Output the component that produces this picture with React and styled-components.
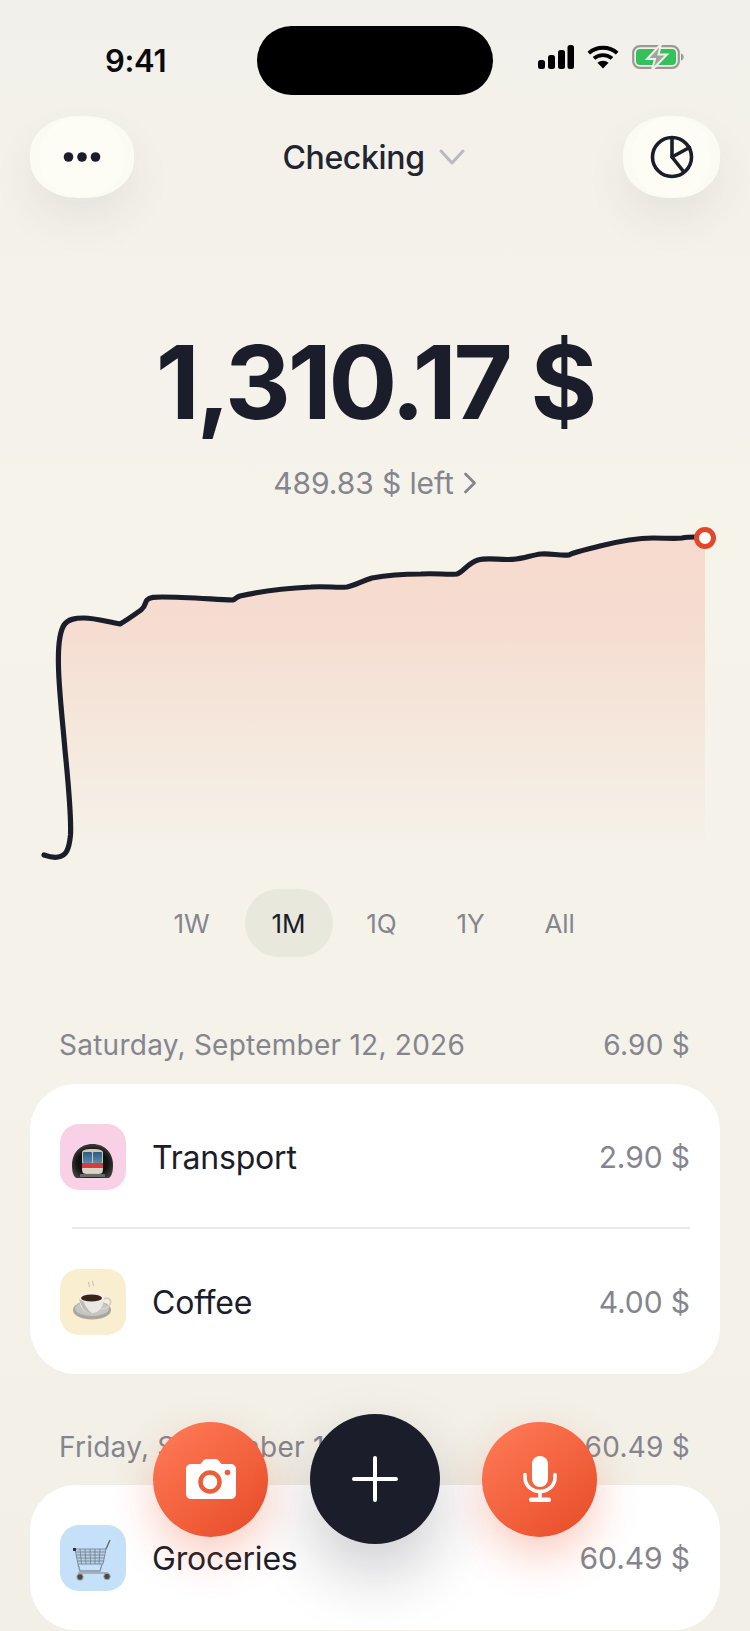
import styled, { createGlobalStyle } from "styled-components";

const GlobalStyle = createGlobalStyle`
  html, body {
    margin: 0;
    padding: 0;
    background: #f3f1e8;
  }
  * {
    box-sizing: border-box;
  }
`;

const Screen = styled.div`
  position: relative;
  width: 750px;
  height: 1631px;
  overflow: hidden;
  background: linear-gradient(#f2f0ea 0, #f5f3ea 520px, #f4f2e9 1000px, #f1efe6 1631px);
  font-family: "Inter", "Liberation Sans", sans-serif;
  color: #1b1d2a;
`;

const StatusBar = styled.div`
  display: flex;
  align-items: center;
  height: 69px;
  margin-top: 26px;
  padding-left: 105px;
`;

const Time = styled.div`
  width: 152px;
  margin-top: 0;
  font-size: 31px;
  font-weight: 600;
  letter-spacing: -0.3px;
  color: #0b0b0d;
`;

const Island = styled.div`
  width: 236px;
  height: 69px;
  border-radius: 35px;
  background: #000;
`;

const StatusIcons = styled.div`
  display: flex;
  align-items: center;
  gap: 13px;
  margin-left: 45px;
  margin-top: -8px;
`;

const Nav = styled.div`
  display: grid;
  grid-template-columns: 1fr auto 1fr;
  align-items: center;
  height: 82px;
  margin-top: 21px;
  padding: 0 30px;
`;

const RoundButton = styled.div`
  position: relative;
  display: flex;
  align-items: center;
  justify-content: center;
  width: ${(p) => p.$w}px;
  height: 82px;
  justify-self: ${(p) => p.$side};
  border-radius: 46%;
  background: #fbfaf3;
  box-shadow: 0 22px 44px rgba(60, 55, 40, 0.07);

  &::before {
    content: "";
    position: absolute;
    inset: 2px 10px;
    border-radius: 44%;
    background: #fefdf5;
  }

  svg {
    position: relative;
  }
`;

const Title = styled.div`
  display: flex;
  align-items: center;
  gap: 14px;
  margin-left: -3px;
  font-size: 32px;
  font-weight: 500;
  letter-spacing: -0.35px;
  color: #22242f;
`;

const Balance = styled.div`
  margin-top: 124px;
  height: 120px;
  line-height: 120px;
  text-align: center;
  font-size: 102px;
  font-weight: 650;
  letter-spacing: -3.2px;
`;

const Remaining = styled.div`
  display: flex;
  align-items: center;
  justify-content: center;
  gap: 9px;
  height: 40px;
  margin-top: 21px;
  font-size: 30px;
  font-weight: 400;
  letter-spacing: -0.1px;
  color: #85858f;
`;

const ChartSvg = styled.svg`
  display: block;
  width: 750px;
  height: 350px;
  margin-top: 17px;
`;

const Tabs = styled.div`
  display: flex;
  justify-content: center;
  gap: 9px;
  margin-top: 19px;
  margin-left: -3px;
`;

const Tab = styled.div`
  display: flex;
  align-items: center;
  justify-content: center;
  width: ${(p) => p.$w}px;
  height: 68px;
  border-radius: 34px;
  font-size: 26px;
  font-weight: 400;
  letter-spacing: -0.1px;
  color: ${(p) => (p.$active ? "#1b1d2a" : "#85858f")};
  background: ${(p) => (p.$active ? "#e9e8dc" : "transparent")};
`;

const DayHead = styled.div`
  display: flex;
  align-items: center;
  justify-content: space-between;
  height: 40px;
  margin-top: ${(p) => p.$top}px;
  padding: 0 60px 0 59px;
  font-size: 28px;
  letter-spacing: 0.25px;
  color: #85858f;
`;

const Card = styled.div`
  margin: ${(p) => p.$top}px 30px 0;
  padding: 40px 30px 39px;
  border-radius: 46px;
  background: #fff;
`;

const Row = styled.div`
  display: flex;
  align-items: center;
  height: 66px;
`;

const Tile = styled.div`
  flex: none;
  width: 66px;
  height: 66px;
  border-radius: 19px;
  background: ${(p) => p.$bg};
`;

const Label = styled.div`
  flex: 1;
  margin-left: 26px;
  font-size: 32px;
  font-weight: 400;
  letter-spacing: -0.2px;
`;

const Amount = styled.div`
  font-size: 30px;
  letter-spacing: -0.1px;
  color: #85858f;
`;

const Divider = styled.div`
  height: 2px;
  margin: 37px 0 40px 12px;
  background: #e9e9e6;
`;

const ActionBar = styled.div`
  position: absolute;
  left: 0;
  right: 0;
  top: 1414px;
  display: flex;
  align-items: center;
  justify-content: center;
  gap: 42px;
`;

const OrangeAction = styled.div`
  display: flex;
  align-items: center;
  justify-content: center;
  width: 115px;
  height: 115px;
  border-radius: 50%;
  background: linear-gradient(140deg, #ff7a56 5%, #e94f2b 92%);
  box-shadow: 0 18px 44px rgba(240, 85, 45, 0.3);
`;

const PlusAction = styled.div`
  display: flex;
  align-items: center;
  justify-content: center;
  width: 130px;
  height: 130px;
  border-radius: 50%;
  background: #1b1d2a;
  box-shadow: 0 30px 64px rgba(27, 29, 42, 0.22);
`;

const SignalIcon = () => (
  <svg width="36" height="24" viewBox="0 0 36 24">
    <rect x="0" y="15" width="7" height="9" rx="2.5" fill="#000" />
    <rect x="10" y="10" width="7" height="14" rx="2.5" fill="#000" />
    <rect x="20" y="5" width="7" height="19" rx="2.5" fill="#000" />
    <rect x="29.5" y="0" width="6.5" height="24" rx="2.5" fill="#000" />
  </svg>
);

const WifiIcon = () => (
  <svg width="32" height="24" viewBox="0 0 32 24" fill="none" stroke="#000" strokeWidth="3.8">
    <path d="M1.8 8.2C9.6 .9 22.4 .9 30.2 8.2" />
    <path d="M7 13.4C12 8.9 20 8.9 25 13.4" />
    <path d="M16 23.6 10.4 17.8C13.6 15 18.4 15 21.6 17.8Z" fill="#000" stroke="none" />
  </svg>
);

const BatteryIcon = () => (
  <svg width="52" height="26" viewBox="0 0 52 26">
    <rect x="1.2" y="2.2" width="45.6" height="21.6" rx="6.5" fill="none" stroke="#9a9a94" strokeWidth="2.2" />
    <rect x="4" y="5" width="40" height="16" rx="4" fill="#34c05a" />
    <path d="M49 9.5c2 .6 2.6 2 2.6 3.5s-.6 2.9-2.6 3.5Z" fill="#9a9a94" />
    <path d="M29 0 15 15h8l-3 11 15-15.5h-8.500Z" fill="#a4a49e" stroke="#f2f0ea" strokeWidth="2" />
  </svg>
);

const DotsIcon = () => (
  <svg width="38" height="12" viewBox="0 0 38 12">
    <circle cx="5.500" cy="6" r="4.800" fill="#1b1d2a" />
    <circle cx="19" cy="6" r="4.800" fill="#1b1d2a" />
    <circle cx="32.500" cy="6" r="4.800" fill="#1b1d2a" />
  </svg>
);

const PieIcon = () => (
  <svg width="44" height="44" viewBox="0 0 44 44" fill="none" stroke="#1b1d2a" strokeWidth="3.6" strokeLinecap="round" strokeLinejoin="round">
    <circle cx="22" cy="22" r="19.500" />
    <path d="M22 3V22L33.500 36.500" />
    <path d="M22 22L39.500 12.500" />
  </svg>
);

const ChevronDown = () => (
  <svg width="26" height="16" viewBox="0 0 26 16" fill="none" stroke="#b9b9bf" strokeWidth="3" strokeLinecap="round" strokeLinejoin="round">
    <path d="M2 2l11 12L24 2" />
  </svg>
);

const ChevronRight = () => (
  <svg width="14" height="22" viewBox="0 0 14 22" fill="none" stroke="#85858f" strokeWidth="2.800" strokeLinecap="round" strokeLinejoin="round">
    <path d="M2.500 2l9 9-9 9" />
  </svg>
);

const LINE =
  "M44 855C50 857 54 858 58 857C66 856 69 850 70.500 835C71.500 815 68 780 65 750C62 715 59 690 58.500 667C58 650 59 633 64 625C68 619 75 618 84 618C95 618 108 622 120 624C127 620 134 615 141 610C146 606 145 602 147 600C150 597 155 597 162 597C185 597 210 599 233 600C235 599 237 597 240 596C262 591 290 588 311 587C325 586 338 588 347 587C356 585 362 581 372 578C388 575 405 574 421 574C435 573 448 575 457 574C463 572 468 563 478 560C489 557 503 561 516 559C525 558 532 555 541 554C550 553 560 556 569 555C575 552 585 550 600 546C620 541 638 538 653 538C665 538 675 539 682 538C687 537 690 537 696 537";

const AREA =
  "M60 640C60 630 64 625 68 620C75 618 95 618 120 624C127 620 134 615 141 610C146 606 145 602 147 600C155 597 210 599 233 600C262 591 290 588 311 587C325 586 338 588 347 587C356 585 362 581 372 578C388 575 405 574 421 574C435 573 448 575 457 574C463 572 468 563 478 560C489 557 503 561 516 559C525 558 532 555 541 554C550 553 560 556 569 555C585 550 620 541 653 538C675 539 690 537 705 538L705 849L72 849C72 780 62 700 60 640Z";

const Chart = () => (
  <ChartSvg viewBox="0 520 750 350">
    <defs>
      <linearGradient id="areaFill" x1="0" y1="0" x2="0" y2="1">
        <stop offset="0" stopColor="#f6dacd" />
        <stop offset="0.3" stopColor="#f6ddd1" />
        <stop offset="0.65" stopColor="#f5e8dd" />
        <stop offset="1" stopColor="#f5f2e9" />
      </linearGradient>
    </defs>
    <path d={AREA} fill="url(#areaFill)" />
    <path d={LINE} fill="none" stroke="#1b1d2a" strokeWidth="5.200" strokeLinecap="round" strokeLinejoin="round" />
    <circle cx="705" cy="538" r="8.500" fill="#fff" stroke="#e2472a" strokeWidth="5" />
  </ChartSvg>
);

const TrainEmoji = () => (
  <svg width="66" height="66" viewBox="0 0 66 66">
    <defs>
      <radialGradient id="tunnel" cx="0.5" cy="0.55" r="0.6">
        <stop offset="0.6" stopColor="#111" />
        <stop offset="1" stopColor="#4a4648" />
      </radialGradient>
      <linearGradient id="trainGlass" x1="0" y1="0" x2="0" y2="1">
        <stop offset="0" stopColor="#2f5a80" />
        <stop offset="1" stopColor="#5d8cae" />
      </linearGradient>
    </defs>
    <path d="M12 41C12 29 20 20 32.500 20S53 29 53 41C53 47 52 52 49 54H16C13 52 12 47 12 41Z" fill="url(#tunnel)" />
    <path d="M22 29C22 26 25 25 32.500 25S43 26 43 29V46C43 49 41 50 39 50H26C24 50 22 49 22 46Z" fill="#cfc7ae" />
    <rect x="23" y="28" width="9" height="11" rx="1" fill="url(#trainGlass)" />
    <rect x="33" y="28" width="9" height="11" rx="1" fill="url(#trainGlass)" />
    <rect x="22" y="39" width="21" height="5" fill="#dc3a3f" />
    <rect x="23" y="44" width="19" height="5" fill="#d8d4ca" />
    <rect x="20" y="50" width="25" height="3" fill="#6a6a6a" />
  </svg>
);

const CoffeeEmoji = () => (
  <svg width="66" height="66" viewBox="0 0 66 66">
    <path d="M29 13c-2 2 2 3 0 5M33 12c-2 2 2 3 0 5" fill="none" stroke="#cfc7b4" strokeWidth="1.200" />
    <ellipse cx="32" cy="41" rx="19" ry="9.500" fill="#a7a6a0" />
    <ellipse cx="32" cy="39.500" rx="17" ry="7.500" fill="#c6c5bf" />
    <path d="M43 30c6-2 9 1 7 5-1 3-5 5-9 5" fill="none" stroke="#d4d2cb" strokeWidth="2" />
    <path d="M19 28C19 38 24 44 31.500 44S44 38 44 28Z" fill="#e9e8e3" />
    <path d="M19 28C20 36 24 44 31.500 44C27 40 24 35 23 30Z" fill="#bdbcb5" />
    <ellipse cx="31.500" cy="28.500" rx="12.500" ry="4.800" fill="#f3f2ec" />
    <ellipse cx="31.500" cy="29" rx="10.500" ry="3.600" fill="#3a2419" />
  </svg>
);

const CartEmoji = () => (
  <svg width="66" height="66" viewBox="0 0 66 66" fill="none">
    <g stroke="#6f7c89" strokeWidth="0.800">
      <path d="M15 24H46L43 39H18Z" fill="#a9c3d8" fillOpacity="0.5" />
      <path d="M15.600 27H45.400M16.200 30H44.800M16.800 33H44.200M17.400 36H43.600" />
      <path d="M20 24l1.500 15M25 24l1 15M30 24l.5 15M35 24v15M40 24l-1 15" />
    </g>
    <path d="M46 24l4-9" stroke="#5b6670" strokeWidth="1.300" />
    <path d="M42 39l-2 7H20l-2-7" stroke="#8693a0" strokeWidth="1.300" />
    <path d="M18 48H48" stroke="#a5b1bc" strokeWidth="2" />
    <rect x="13" y="23" width="3" height="3" fill="#2c3238" />
    <circle cx="20" cy="52" r="3.200" fill="#4a4a4a" stroke="#a5a49c" />
    <circle cx="47" cy="51.500" r="3.200" fill="#4a4a4a" stroke="#a5a49c" />
  </svg>
);

const CameraIcon = () => (
  <svg width="50" height="40" viewBox="0 0 50 40">
    <path d="M5 5h9.500l2.500-3C18 .6 19.500 0 21 0h8c1.500 0 3 .6 4 2l2.500 3H45c2.800 0 5 2.200 5 5v25c0 2.800-2.200 5-5 5H5c-2.800 0-5-2.200-5-5V10c0-2.800 2.200-5 5-5Z" fill="#fff" />
    <circle cx="24" cy="23" r="9.500" fill="none" stroke="#ef5c38" strokeWidth="4.500" />
    <circle cx="41.500" cy="13.500" r="2.800" fill="#ef5c38" />
  </svg>
);

const MicIcon = () => (
  <svg width="34" height="46" viewBox="0 0 34 46" fill="none">
    <rect x="9" y="0" width="16" height="31" rx="8" fill="#fff" />
    <path d="M2 18.500v3C2 30 9 35.500 17 35.500S32 30 32 21.500v-3" stroke="#fff" strokeWidth="3.600" strokeLinecap="round" />
    <path d="M17 35.500V43" stroke="#fff" strokeWidth="3.600" />
    <rect x="6" y="41.500" width="22" height="4.500" rx="2" fill="#fff" />
  </svg>
);

const PlusIcon = () => (
  <svg width="46" height="46" viewBox="0 0 46 46" stroke="#fff" strokeWidth="4" strokeLinecap="round">
    <path d="M23 2v42M2 23h42" />
  </svg>
);

const TABS = [
  { label: "1W", width: 88 },
  { label: "1M", width: 88 },
  { label: "1Q", width: 80 },
  { label: "1Y", width: 80 },
  { label: "All", width: 80 },
];

const App = () => {
  return (
    <Screen>
      <GlobalStyle />
      <StatusBar>
        <Time>9:41</Time>
        <Island />
        <StatusIcons>
          <SignalIcon />
          <WifiIcon />
          <BatteryIcon />
        </StatusIcons>
      </StatusBar>

      <Nav>
        <RoundButton $w={104} $side="start">
          <DotsIcon />
        </RoundButton>
        <Title>
          Checking
          <ChevronDown />
        </Title>
        <RoundButton $w={97} $side="end">
          <PieIcon />
        </RoundButton>
      </Nav>

      <Balance>1,310.17 $</Balance>
      <Remaining>
        489.83 $ left
        <ChevronRight />
      </Remaining>

      <Chart />

      <Tabs>
        {TABS.map((t) => (
          <Tab key={t.label} $w={t.width} $active={t.label === "1M"}>
            {t.label}
          </Tab>
        ))}
      </Tabs>

      <DayHead $top={68}>
        <span>Saturday, September 12, 2026</span>
        <span>6.90 $</span>
      </DayHead>
      <Card $top={19}>
        <Row>
          <Tile $bg="#f9d1e6">
            <TrainEmoji />
          </Tile>
          <Label>Transport</Label>
          <Amount>2.90 $</Amount>
        </Row>
        <Divider />
        <Row>
          <Tile $bg="#f9eecf">
            <CoffeeEmoji />
          </Tile>
          <Label>Coffee</Label>
          <Amount>4.00 $</Amount>
        </Row>
      </Card>

      <DayHead $top={53}>
        <span>Friday, September 11, 2026</span>
        <span>60.49 $</span>
      </DayHead>
      <Card $top={18}>
        <Row>
          <Tile $bg="#c5e0f9">
            <CartEmoji />
          </Tile>
          <Label>Groceries</Label>
          <Amount>60.49 $</Amount>
        </Row>
      </Card>

      <ActionBar>
        <OrangeAction>
          <CameraIcon />
        </OrangeAction>
        <PlusAction>
          <PlusIcon />
        </PlusAction>
        <OrangeAction>
          <MicIcon />
        </OrangeAction>
      </ActionBar>
    </Screen>
  );
};

export default App;
